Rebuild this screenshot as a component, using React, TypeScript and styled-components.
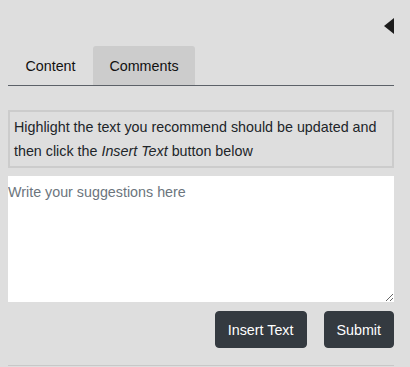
import React from 'react';
import styled, { createGlobalStyle } from 'styled-components';

const GlobalStyle = createGlobalStyle`
  html, body {
    margin: 0;
    padding: 0;
    background: #dedede;
  }
  body {
    font-family: "Liberation Sans", Arial, sans-serif;
    font-size: 14.3px;
    color: #212529;
  }
`;

const Panel = styled.div`
  width: 386px;
  padding: 0 16px 0 8px;
  display: flex;
  flex-direction: column;
`;

const TopBar = styled.div`
  height: 46px;
  display: flex;
  justify-content: flex-end;
  align-items: flex-start;
  padding-top: 18px;
  box-sizing: border-box;
`;

const CollapseArrow = styled.div`
  width: 0;
  height: 0;
  border-top: 8px solid transparent;
  border-bottom: 8px solid transparent;
  border-right: 10px solid #1b1b1b;
  cursor: pointer;
`;

const TabRow = styled.div`
  display: flex;
  border-bottom: 1px solid #5c6168;
  height: 39px;
`;

interface ITabProps {
  active?: boolean;
}

const Tab = styled.div<ITabProps>`
  display: flex;
  align-items: center;
  justify-content: center;
  width: ${props => (props.active ? '102px' : '85px')};
  background: ${props => (props.active ? '#cccccc' : 'transparent')};
  border-radius: 3px 3px 0 0;
  color: #111;
  cursor: pointer;
`;

const Hint = styled.div`
  margin-top: 24px;
  border: 2px solid #cccccc;
  padding: 3px 4px;
  line-height: 24px;
  color: #212529;
`;

const Suggestions = styled.textarea`
  margin-top: 8px;
  height: 126px;
  border: none;
  padding: 8px 0 4px;
  font-family: "Liberation Sans", Arial, sans-serif;
  font-size: 14.3px;
  background: #fff;
  box-sizing: border-box;
  resize: vertical;
  outline: none;
  &::placeholder {
    color: #6c757d;
  }
`;

const Actions = styled.div`
  display: flex;
  justify-content: flex-end;
  gap: 17px;
  margin-top: 9px;
`;

const ActionButton = styled.button`
  height: 37px;
  padding: 0 12px;
  background: #343a40;
  color: #fff;
  border: 1px solid #343a40;
  border-radius: 4px;
  font-family: "Liberation Sans", Arial, sans-serif;
  font-size: 14.3px;
  cursor: pointer;
`;

const Divider = styled.hr`
  margin: 17px 0 0;
  border: none;
  border-top: 1px solid #c8c8c8;
`;

const App = (): JSX.Element => {
  return (
    <>
      <GlobalStyle />
      <Panel>
        <TopBar>
          <CollapseArrow />
        </TopBar>
        <TabRow>
          <Tab>Content</Tab>
          <Tab active>Comments</Tab>
        </TabRow>
        <Hint>
          Highlight the text you recommend should be updated and then click the <em>Insert Text</em> button below
        </Hint>
        <Suggestions placeholder="Write your suggestions here" />
        <Actions>
          <ActionButton>Insert Text</ActionButton>
          <ActionButton>Submit</ActionButton>
        </Actions>
        <Divider />
      </Panel>
    </>
  );
};

export default App;
